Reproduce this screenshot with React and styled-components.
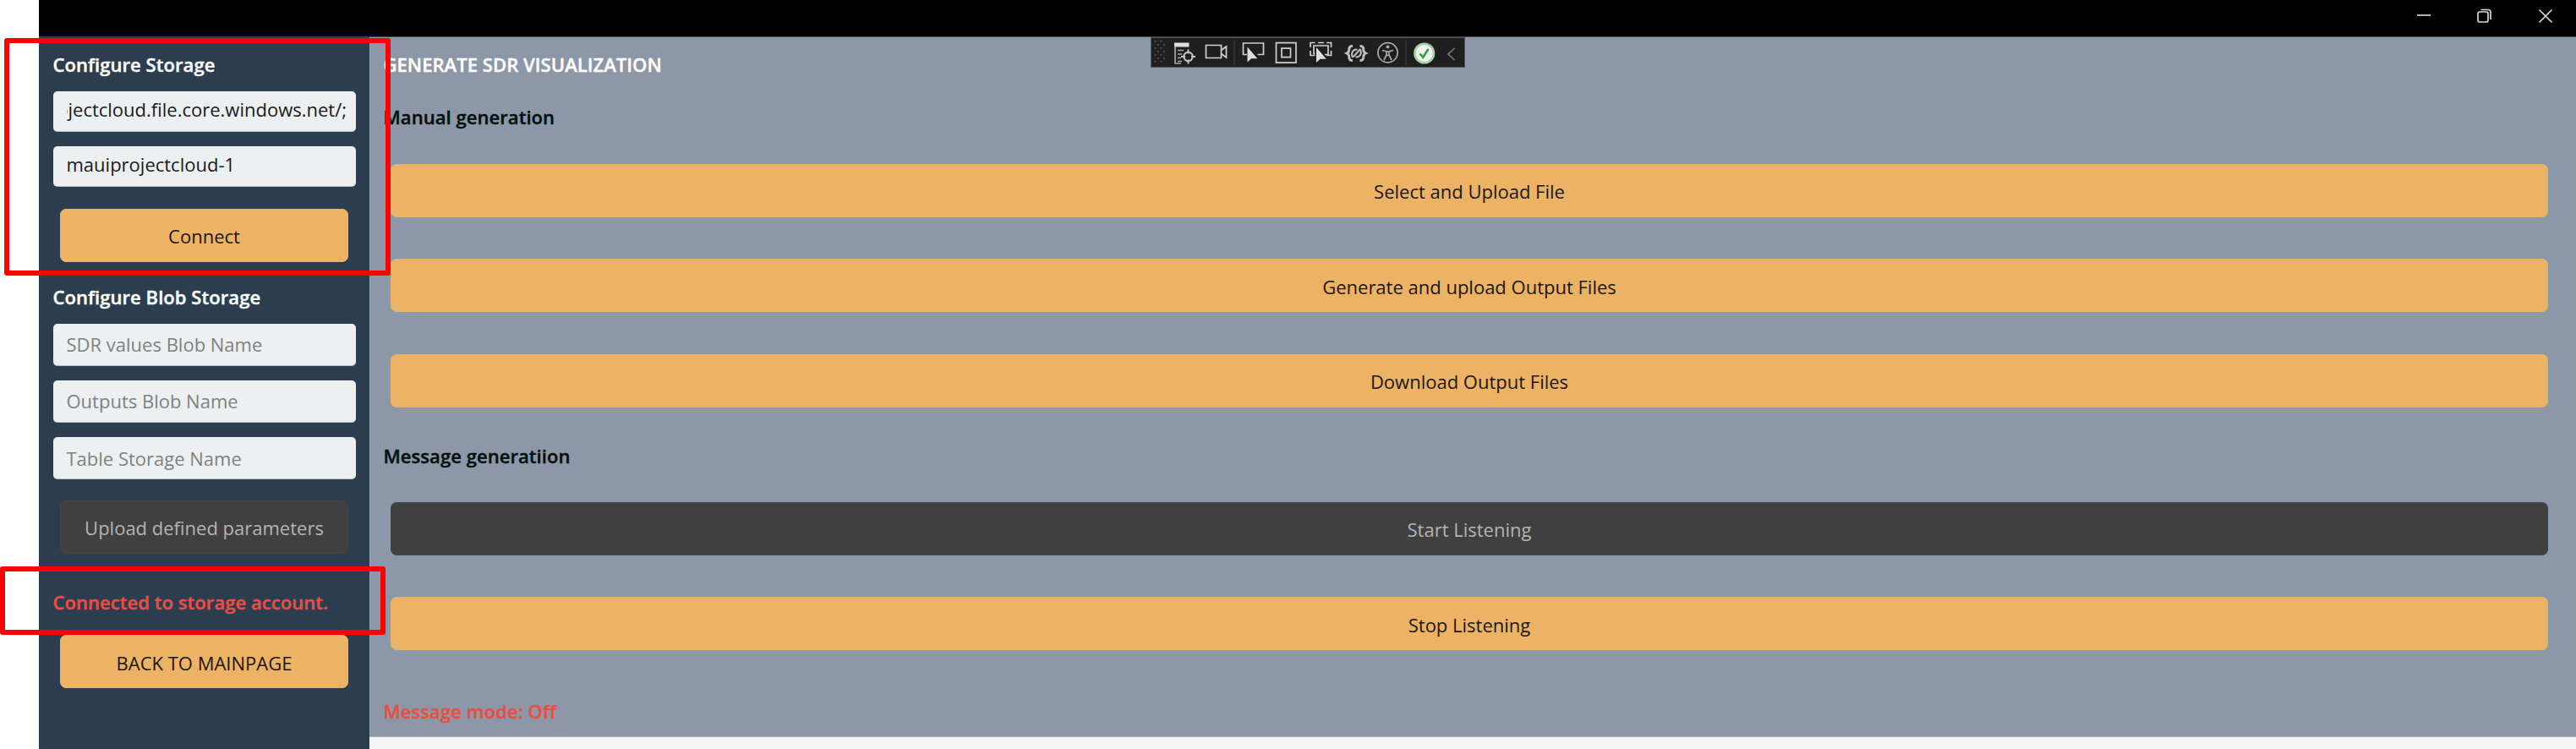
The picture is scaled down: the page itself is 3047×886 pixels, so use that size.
import React from "react";
import styled, { createGlobalStyle, css } from "styled-components";

const GlobalStyle = createGlobalStyle`
  *, *::before, *::after { box-sizing: border-box; }
  body {
    margin: 0;
    background: #fff;
    font-family: "Open Sans", "Noto Sans", sans-serif;
    font-size: 22px;
    overflow: hidden;
  }
`;

const Screen = styled.div`
  position: relative;
  width: 3047px;
  height: 886px;
  padding-left: 46px;
  overflow: hidden;
`;

const AppWindow = styled.div`
  height: 100%;
  display: flex;
  flex-direction: column;
`;

const TitleBar = styled.header`
  flex: none;
  height: 44px;
  padding: 8px 25px 0 0;
  background: #000;
  border-bottom: 1px solid #3c4148;
  display: flex;
  justify-content: flex-end;
  gap: 50px;
`;

const CaptionIcon = styled.svg`
  width: 22px;
  height: 22px;
  fill: none;
  stroke: #d6d6d6;
  stroke-width: 1.7;
`;

const Body = styled.div`
  flex: 1;
  display: flex;
  min-height: 0;
`;

const Sidebar = styled.aside`
  width: 391px;
  flex: none;
  padding: 16.5px 16.5px 0;
  background: #2d3d50;
  display: flex;
  flex-direction: column;
`;

const MainColumn = styled.main`
  flex: 1;
  display: flex;
  flex-direction: column;
  background: #f4f4f4;
`;

const Content = styled.section`
  height: 828px;
  padding: 17px 24.5px 0 15.5px;
  background: #8c98a7;
  border-left: 1px solid #98a3b2;
  border-bottom: 1px solid #a9b1bc;
  display: flex;
  flex-direction: column;
`;

const Heading = styled.h2`
  margin: ${(p) => p.$margin || "0"};
  height: 30px;
  flex: none;
  font-size: 22px;
  line-height: 30px;
  font-weight: 600;
  letter-spacing: 0.06px;
  white-space: nowrap;
  color: ${(p) => p.$color || "#fff"};
  -webkit-text-stroke: 0.4px currentColor;
`;

const fieldText = css`
  line-height: 30px;
  white-space: nowrap;
`;

const Field = styled.div`
  flex: none;
  height: ${(p) => (p.$filled ? 48 : 50)}px;
  padding: 0 10.5px 0 16px;
  padding-bottom: ${(p) => (p.$filled ? 5 : 0)}px;
  border-radius: 5px;
  background: #ecf0f1;
  border-bottom: 1px solid #b9c0c7;
  color: ${(p) => (p.$filled ? "#191b1c" : "#7f8182")};
  display: flex;
  align-items: center;
`;

const FieldValue = styled.span`
  ${fieldText}
  flex: 1;
  display: flex;
  justify-content: ${(p) => (p.$scrolled ? "flex-end" : "flex-start")};
  overflow: hidden;
`;

const FieldGroup = styled.div`
  display: flex;
  flex-direction: column;
  gap: ${(p) => p.$gap}px;
  margin-top: ${(p) => p.$top}px;
`;

const Button = styled.button`
  flex: none;
  height: 63px;
  margin: 0 8.5px;
  padding: 2px 0 0;
  border: 1px solid ${(p) => (p.disabled ? "#42464a" : "#e5b36b")};
  border-radius: 7px;
  background: ${(p) => (p.disabled ? "#404040" : "#ebb363")};
  color: ${(p) => (p.disabled ? "#b4b4b4" : "#1c160c")};
  font: inherit;
  line-height: 30px;
`;

const SidebarButton = styled(Button)`
  margin-top: ${(p) => p.$top}px;
`;

const ActionList = styled.div`
  display: flex;
  flex-direction: column;
  gap: 49.5px;
`;

const DebugToolbar = styled.div`
  position: absolute;
  left: 1361px;
  top: 44px;
  width: 372px;
  height: 36px;
  background: #1f1f1f;
  border: 1px solid #57534f;
`;

const ToolbarArt = styled.svg`
  display: block;
  width: 370px;
  height: 34px;
  fill: none;
  stroke: #d0d0d0;
  stroke-width: 1.7;
`;

const Highlight = styled.div`
  position: absolute;
  left: ${(p) => p.$x}px;
  top: ${(p) => p.$y}px;
  width: ${(p) => p.$w}px;
  height: ${(p) => p.$h}px;
  border: 6px solid #f00;
  border-radius: 3px;
`;

const gripDots = [];
for (let row = 0; row < 7; row += 1) {
  for (let col = 0; col < 2; col += 1) {
    gripDots.push([4.5 + col * 7 + (row % 2) * 3.5, 4 + row * 4]);
  }
}

function ToolbarIcons() {
  return (
    <ToolbarArt viewBox="1362 45 370 34" aria-hidden="true">
      <g fill="#5a5a5a" stroke="none">
        {gripDots.map(([x, y]) => (
          <rect key={`${x}-${y}`} x={1361 + x} y={44 + y} width="2" height="1.6" />
        ))}
      </g>

      {/* live visual tree */}
      <g>
        <rect x="1389" y="50.5" width="17.5" height="5" fill="#dedede" stroke="none" />
        <path d="M1390 55v20h7M1393 59.500h7M1393 64h5M1393 68.500h4M1393 72.500h5" stroke="#a9a9a9" />
        <circle cx="1405.500" cy="67" r="5.200" stroke="#c4c4c4" strokeWidth="2" />
        <path d="M1405.500 58.500v5M1405.500 70.500v5M1397 67h5M1409 67h5" stroke="#c4c4c4" strokeWidth="2" />
      </g>

      {/* camera */}
      <path d="M1426.500 53.500h18v15h-18zM1444.500 59.500l6-4.500v13l-6-4.500" />

      <path d="M1460 47.500v30M1663 47.500v30" stroke="#3d3d3d" strokeWidth="1.2" />

      {/* select element */}
      <path d="M1475 64.500h-4.500V51h24v13.500h-7" />
      <path d="M1475.500 55.500v18l4.600-4.300h7.200z" fill="#dedede" stroke="none" />

      {/* layout adorners */}
      <path d="M1509.500 50.700h23.500v23.500h-23.500zM1516 57.200h10.500v10.500h-10.500z" />

      {/* track focused element */}
      <path d="M1550 56v-5.500h5.500M1569 50.500h5.500V56M1574.500 60v5.500h-5.500M1555.500 65.500h-5.500V60" />
      <path d="M1555.500 63.500h-1.500v-9.500h17v10.500h-4M1559 50.500h7" />
      <path d="M1557 56v18l4.600-4.300h7.200z" fill="#dedede" stroke="none" />

      {/* hot reload */}
      <g stroke="#bdbdbd" strokeWidth="3">
        <path d="M1600 54.500c-5-.5-4 4-4.500 6-.5 1.500-1.500 2-2.500 2.500 1 .5 2 1 2.500 2.500.5 2-.5 6.500 4.500 6" />
        <path d="M1608.500 54.500c5-.5 4 4 4.500 6 .5 1.500 1.500 2 2.500 2.500-1 .5-2 1-2.500 2.500-.5 2 .5 6.500-4.500 6" />
        <path d="M1600.500 68c-3-4-1-10 5-9.500M1608.500 58c3 4 1 10-5 9.500M1601 67l8-9" strokeWidth="2" />
      </g>

      {/* accessibility */}
      <g stroke="#a8a8a8">
        <circle cx="1641.500" cy="62.300" r="11.600" />
        <circle cx="1641.500" cy="55.500" r="2" fill="#a8a8a8" stroke="none" />
        <path d="M1635 59.500l5 1.500v4l-3 6M1648 59.500l-5 1.500v4l3 6M1640 61h3M1640.200 65.500h2.600" />
      </g>

      {/* status */}
      <circle cx="1684.700" cy="63" r="11.300" fill="#f1f5f1" stroke="#a5d3a5" strokeWidth="2.600" />
      <path d="M1679.500 63.500l3.700 4.300 6.300-9.800" stroke="#2f9e3c" strokeWidth="2.500" />

      <path d="M1720.500 57l-7.500 7 7.500 7" stroke="#777" />
    </ToolbarArt>
  );
}

export default function App() {
  return (
    <Screen>
      <GlobalStyle />
      <AppWindow>
        <TitleBar>
          <CaptionIcon viewBox="0 0 22 22">
            <path d="M3 10h16" />
          </CaptionIcon>
          <CaptionIcon viewBox="0 0 22 22">
            <rect x="3" y="6" width="12" height="12" rx="2" />
            <path d="M6.500 3.500h8.500a3 3 0 0 1 3 3v8.500" />
          </CaptionIcon>
          <CaptionIcon viewBox="0 0 22 22">
            <path d="M3.500 3.500l15 15M18.500 3.500l-15 15" />
          </CaptionIcon>
        </TitleBar>
        <Body>
          <Sidebar>
            <Heading>Configure Storage</Heading>
            <FieldGroup $gap={17.5} $top={17}>
              <Field $filled>
                <FieldValue $scrolled>ojectcloud.file.core.windows.net/;</FieldValue>
              </Field>
              <Field $filled>
                <FieldValue>mauiprojectcloud-1</FieldValue>
              </Field>
            </FieldGroup>
            <SidebarButton $top={25.5}>Connect</SidebarButton>
            <Heading $margin="26.5px 0 0">Configure Blob Storage</Heading>
            <FieldGroup $gap={17.3} $top={16.5}>
              <Field>SDR values Blob Name</Field>
              <Field>Outputs Blob Name</Field>
              <Field>Table Storage Name</Field>
            </FieldGroup>
            <SidebarButton $top={24.5} disabled>
              Upload defined parameters
            </SidebarButton>
            <Heading $margin="42px 0 0" $color="#e94f40">
              Connected to storage account.
            </Heading>
            <SidebarButton $top={24.5}>BACK TO MAINPAGE</SidebarButton>
          </Sidebar>
          <MainColumn>
            <Content>
              <Heading>GENERATE SDR VISUALIZATION</Heading>
              <Heading $margin="32px 0 40.5px" $color="#04100f">
                Manual generation
              </Heading>
              <ActionList>
                <Button>Select and Upload File</Button>
                <Button>Generate and upload Output Files</Button>
                <Button>Download Output Files</Button>
              </ActionList>
              <Heading $margin="42px 0 40px" $color="#04100f">
                Message generatiion
              </Heading>
              <ActionList>
                <Button disabled>Start Listening</Button>
                <Button>Stop Listening</Button>
              </ActionList>
              <Heading $margin="57px 0 0" $color="#e94f40">
                Message mode: Off
              </Heading>
            </Content>
          </MainColumn>
        </Body>
      </AppWindow>
      <DebugToolbar>
        <ToolbarIcons />
      </DebugToolbar>
      <Highlight $x={5} $y={45} $w={457} $h={281} />
      <Highlight $x={0} $y={670} $w={456} $h={81} />
    </Screen>
  );
}
